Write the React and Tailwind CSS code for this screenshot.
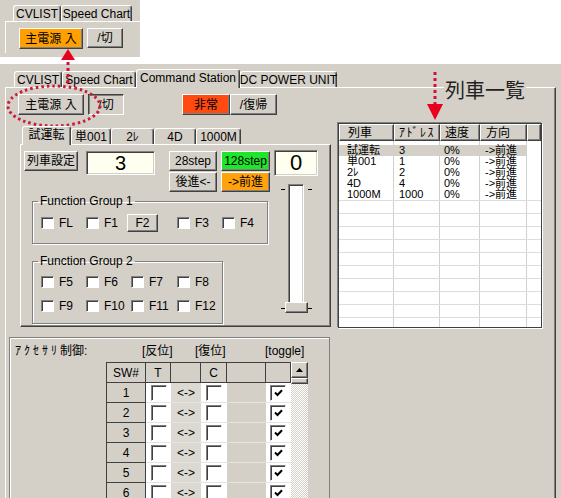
import React from 'react';

// classic windows edges
const RAISED = 'border border-t-white border-l-white border-r-[#404040] border-b-[#404040] shadow-[inset_-1px_-1px_0_#808080]';
const SUNKEN = 'border border-t-[#808080] border-l-[#808080] border-r-white border-b-white shadow-[inset_1px_1px_0_#404040,inset_-1px_-1px_0_#d4d0c8]';

function Btn({ children, bg = 'bg-[#d4d0c8]', pressed = false, className = '' }) {
  const edge = pressed
    ? 'border border-t-[#404040] border-l-[#404040] border-r-white border-b-white shadow-[inset_1px_1px_0_#808080]'
    : RAISED;
  return (
    <div className={`flex shrink-0 items-center justify-center whitespace-nowrap text-[12px] leading-none ${bg} ${edge} ${className}`}>
      {children}
    </div>
  );
}

function Tab({ children, active = false, w }) {
  if (active) {
    return (
      <div className={`relative z-10 -mb-px flex h-[19px] shrink-0 items-center justify-center whitespace-nowrap rounded-t-[3px] border-t border-l border-r border-t-white border-l-white border-r-[#404040] bg-[#d4d0c8] pb-[2px] shadow-[inset_-1px_0_0_#808080] ${w}`}>
        {children}
      </div>
    );
  }
  return (
    <div className={`flex h-[16px] shrink-0 items-center justify-center whitespace-nowrap rounded-t-[3px] border-t border-l border-r border-t-white border-l-white border-r-[#404040] shadow-[inset_-1px_0_0_#808080] ${w}`}>
      {children}
    </div>
  );
}

function Check({ checked = false, big = false }) {
  return (
    <div className={`flex shrink-0 items-center justify-center border border-t-[#808080] border-l-[#808080] border-r-white border-b-white bg-white shadow-[inset_1px_1px_0_#404040] ${big ? 'h-[16px] w-[16px]' : 'h-[12px] w-[13px]'}`}>
      {checked && (
        <svg width="9" height="8" viewBox="0 0 9 8">
          <path d="M1 3.5 L3.5 6 L8 1.2" fill="none" stroke="#000" strokeWidth="2" />
        </svg>
      )}
    </div>
  );
}

function Field({ children, className = '' }) {
  return (
    <div className={`flex shrink-0 items-center justify-center bg-[#fffff0] ${SUNKEN} ${className}`}>
      {children}
    </div>
  );
}

function CheckItem({ label, w }) {
  return (
    <div className={`flex items-center ${w}`}>
      <Check />
      <span className="ml-[5px]">{label}</span>
    </div>
  );
}

function TopInset() {
  return (
    <div className="h-[57px] w-[140px] bg-[#d4d0c8] pt-[4px]">
      <div className="flex h-[17px] items-end pl-[13px]">
        <Tab w="w-[48px]">CVLIST</Tab>
        <Tab w="w-[71px]">Speed Chart</Tab>
      </div>
      <div className="ml-[5px] flex h-[32px] border-t border-l border-white pl-[13px] pt-[6px]">
        <Btn bg="bg-[#ffa000]" className="h-[21px] w-[64px]">主電源 入</Btn>
        <Btn className="ml-[4px] h-[20px] w-[36px]">/切</Btn>
      </div>
    </div>
  );
}

function Slider() {
  return (
    <div className="relative mt-[8px] h-[130px] w-[44px]">
      <div className={`mx-auto h-[126px] w-[16px] bg-white ${SUNKEN}`} />
      <div className="absolute left-[7px] top-[5px] h-px w-[4px] bg-black" />
      <div className="absolute left-[34px] top-[5px] h-px w-[4px] bg-black" />
      <div className="absolute left-[7px] top-[124px] h-px w-[4px] bg-black" />
      <div className="absolute left-[34px] top-[124px] h-px w-[4px] bg-black" />
      <div className={`absolute left-[11px] top-[118px] h-[11px] w-[23px] bg-[#d4d0c8] ${RAISED}`} />
    </div>
  );
}

function TrainPanel() {
  return (
    <div className="ml-[14px] h-[183px] w-[311px] border border-t-white border-l-white border-r-[#404040] border-b-[#404040] shadow-[inset_-1px_-1px_0_#808080]">
      <div className="flex pl-[3px] pt-[5px]">
        <div className="w-[246px]">
          <div className="flex items-start pt-px">
            <Btn className="h-[20px] w-[54px]">列車設定</Btn>
            <Field className="ml-[8px] h-[24px] w-[69px] text-[20px]">3</Field>
            <div className="ml-[14px] flex flex-col gap-px">
              <div className="flex gap-[4px]">
                <Btn className="h-[20px] w-[48px]">28step</Btn>
                <Btn bg="bg-[#1ee628]" className="h-[20px] w-[49px]">128step</Btn>
              </div>
              <div className="flex gap-[4px]">
                <Btn className="h-[20px] w-[48px]">{'後進<-'}</Btn>
                <Btn bg="bg-[#ffa20c]" className="h-[20px] w-[49px]">{'->前進'}</Btn>
              </div>
            </div>
          </div>

          <fieldset className="ml-[8px] mt-[3px] h-[49px] w-[236px] border border-[#808080] pl-[8px] shadow-[inset_1px_1px_0_#fff,1px_1px_0_#fff]">
            <legend className="-ml-[3px] px-[2px] leading-[12px]">Function Group 1</legend>
            <div className="mt-[7px] flex h-[18px] items-center">
              <CheckItem label="FL" w="w-[45px]" />
              <CheckItem label="F1" w="w-[41px]" />
              <div className="w-[50px]">
                <Btn className="h-[18px] w-[31px]">F2</Btn>
              </div>
              <CheckItem label="F3" w="w-[45px]" />
              <CheckItem label="F4" w="w-[45px]" />
            </div>
          </fieldset>

          <fieldset className="ml-[8px] mt-[11px] h-[69px] w-[187px] border border-[#808080] pl-[8px] shadow-[inset_1px_1px_0_#fff,1px_1px_0_#fff]">
            <legend className="-ml-[3px] px-[2px] leading-[12px]">Function Group 2</legend>
            <div className="grid grid-cols-[45px_45px_46px_45px] gap-y-[6px] pt-[6px]">
              {['F5', 'F6', 'F7', 'F8', 'F9', 'F10', 'F11', 'F12'].map((f) => (
                <div key={f} className="flex h-[18px] items-center">
                  <Check />
                  <span className="ml-[5px]">{f}</span>
                </div>
              ))}
            </div>
          </fieldset>
        </div>

        <div className="ml-[4px] flex w-[44px] flex-col">
          <Field className="h-[26px] w-[44px] text-[22px]">0</Field>
          <Slider />
        </div>
      </div>
    </div>
  );
}

function Accessory() {
  const head = 'flex items-center justify-center border-r border-b border-[#404040] bg-[#d4d0c8]';
  return (
    <div className="ml-[3px] mt-[10px] h-[200px] w-[321px] border-t border-l border-r border-[#808080] shadow-[inset_1px_1px_0_#fff]">
      <div className="box-content flex h-[12px] items-center pl-[5px] pt-[7px]">
        <span className="w-[127px]"><span className="tracking-[3px]">ｱｸｾｻﾘ</span>制御:</span>
        <span className="w-[53px]">[反位]</span>
        <span className="w-[70px]">[復位]</span>
        <span>[toggle]</span>
      </div>
      <div className="ml-[96px] mt-[5px] flex">
        <div className="w-[185px] border-t border-l border-[#404040]">
          <div className="flex h-[20px]">
            <div className={`${head} w-[39px]`}>SW#</div>
            <div className={`${head} w-[25px]`}>T</div>
            <div className={`${head} w-[30px]`} />
            <div className={`${head} w-[26px]`}>C</div>
            <div className={`${head} w-[39px]`} />
            <div className={`${head} w-[25px]`} />
          </div>
          {[1, 2, 3, 4, 5, 6].map((n) => (
            <div key={n} className="flex h-[20px]">
              <div className={`${head} w-[39px]`}>{n}</div>
              <div className="flex w-[25px] items-center border-b border-[#e6e4e0] bg-white pl-[5px]">
                <Check big />
              </div>
              <div className="flex w-[30px] items-center justify-center border-b border-[#e6e4e0] bg-[#dcd9d3]">{'<->'}</div>
              <div className="flex w-[26px] items-center border-b border-[#e6e4e0] bg-white pl-[5px]">
                <Check big />
              </div>
              <div className="w-[39px] border-b border-[#e6e4e0] bg-[#d4d0c8]" />
              <div className="flex w-[25px] items-center border-b border-[#e6e4e0] bg-white pl-[4px]">
                <Check big checked />
              </div>
            </div>
          ))}
        </div>
        <div className="flex h-[150px] w-[17px] flex-col">
          <div className={`flex h-[16px] items-center justify-center bg-[#d4d0c8] ${RAISED}`}>
            <svg width="7" height="4" viewBox="0 0 7 4">
              <path d="M0 4 L3.5 0 L7 4 Z" fill="#000" />
            </svg>
          </div>
          <div className={`h-[6px] bg-[#d4d0c8] ${RAISED}`} />
          <div className="flex-1 bg-[repeating-conic-gradient(#ffffff_0_25%,#d4d0c8_0_50%)] bg-[length:2px_2px]" />
        </div>
      </div>
    </div>
  );
}

const TRAINS = [
  ['試運転', '3', '0%', '->前進'],
  ['単001', '1', '0%', '->前進'],
  ['2ﾚ', '2', '0%', '->前進'],
  ['4D', '4', '0%', '->前進'],
  ['1000M', '1000', '0%', '->前進'],
];

function TrainList() {
  const hd = 'flex h-full items-center border-t border-l border-t-white border-l-white border-r border-b border-r-[#404040] border-b-[#404040] shadow-[inset_-1px_-1px_0_#808080]';
  const line = 'border-r border-[#d0d0d0]';
  return (
    <div className="h-[205px] w-[204px] overflow-hidden border border-[#404040] bg-white shadow-[1px_1px_0_#fff,-1px_-1px_0_#808080]">
      <div className="flex h-[17px] bg-[#d4d0c8]">
        <div className={`${hd} w-[55px] pl-[8px]`}>列車</div>
        <div className={`${hd} w-[46px] pl-[4px]`}><span className="tracking-[1.5px]">ｱﾄﾞﾚｽ</span></div>
        <div className={`${hd} w-[40px] pl-[4px]`}>速度</div>
        <div className={`${hd} w-[47px] pl-[5px]`}>方向</div>
        <div className={`${hd} flex-1`} />
      </div>
      <div className="flex h-[4px]">
        <div className={`w-[55px] ${line}`} />
        <div className={`w-[46px] ${line}`} />
        <div className={`w-[40px] ${line}`} />
        <div className={`w-[47px] ${line}`} />
      </div>
      {TRAINS.map((t, i) => (
        <div key={t[0]} className="flex h-[11px] text-[11px] leading-[11px]">
          <div className={`w-[55px] pl-[8px] ${line} ${i === 0 ? 'bg-[#d4d0c8]' : ''}`}>{t[0]}</div>
          <div className={`w-[46px] pl-[5px] ${line} ${i === 0 ? 'bg-[#d4d0c8]' : ''}`}>{t[1]}</div>
          <div className={`w-[40px] pl-[4px] ${line} ${i === 0 ? 'bg-[#d4d0c8]' : ''}`}>{t[2]}</div>
          <div className={`w-[47px] pl-[5px] ${line} ${i === 0 ? 'bg-[#d4d0c8]' : ''}`}>{t[3]}</div>
        </div>
      ))}
      {Array.from({ length: 10 }).map((_, i) => (
        <div key={i} className="flex h-[13px] border-t border-[#dcdcdc]">
          <div className={`w-[55px] ${line}`} />
          <div className={`w-[46px] ${line}`} />
          <div className={`w-[40px] ${line}`} />
          <div className={`w-[47px] ${line}`} />
        </div>
      ))}
    </div>
  );
}

function MainWindow() {
  return (
    <div className="mt-[7px] flex h-[434px] w-[561px] flex-col bg-[#d4d0c8] pl-[5px]">
      <div className="flex h-[23px] shrink-0 items-end pl-[9px]">
        <Tab w="w-[48px]">CVLIST</Tab>
        <Tab w="w-[74px]">Speed Chart</Tab>
        <Tab active w="w-[104px]">Command Station</Tab>
        <Tab w="w-[97px]">DC POWER UNIT</Tab>
      </div>
      <div className="flex w-[551px] flex-1 border-t border-l border-r border-t-white border-l-white border-r-[#404040] shadow-[inset_-1px_0_0_#808080]">
        <div className="w-[324px] shrink-0">
          <div className="flex pl-[12px] pt-[6px]">
            <Btn className="h-[21px] w-[66px]">主電源 入</Btn>
            <Btn pressed className="ml-[4px] h-[21px] w-[36px]">/切</Btn>
            <Btn bg="bg-[#ff4a10]" className="ml-[58px] h-[21px] w-[48px]">非常</Btn>
            <Btn className="h-[21px] w-[47px]">/復帰</Btn>
          </div>
          <div className="mt-[11px] flex h-[18px] items-end pl-[16px]">
            <Tab active w="w-[49px]">試運転</Tab>
            <Tab w="w-[40px]">単001</Tab>
            <Tab w="w-[43px]">2ﾚ</Tab>
            <Tab w="w-[42px]">4D</Tab>
            <Tab w="w-[45px]">1000M</Tab>
          </div>
          <TrainPanel />
          <Accessory />
        </div>
        <div className="flex-1 pl-[8px] pt-[35px]">
          <TrainList />
        </div>
      </div>
    </div>
  );
}

export default function App() {
  return (
    <div className="relative h-[498px] w-[561px] overflow-hidden bg-white font-['Liberation_Sans','Noto_Sans_CJK_JP',sans-serif] text-[12px] leading-none text-black">
      <TopInset />
      <MainWindow />

      {/* caption over the tab panel border */}
      <div className="absolute left-[444px] top-[80px] bg-[#d4d0c8] px-px text-[20px] leading-[22px] text-[#222]">列車一覧</div>

      {/* red annotation marks */}
      <svg className="pointer-events-none absolute left-0 top-0" width="561" height="498">
        <polygon points="61,60 75,60 68,49" fill="#e8001c" />
        <line x1="68" y1="62" x2="68" y2="86" stroke="#d0103a" strokeWidth="3" strokeDasharray="3 3" />
        <ellipse cx="54" cy="106" rx="46" ry="20" fill="none" stroke="#cc1a3a" strokeWidth="3" strokeDasharray="2.5 3" />
        <line x1="435" y1="72" x2="435" y2="104" stroke="#d0103a" strokeWidth="3" strokeDasharray="3 3" />
        <polygon points="427,104 443,104 435,120" fill="#e8001c" />
      </svg>
    </div>
  );
}
